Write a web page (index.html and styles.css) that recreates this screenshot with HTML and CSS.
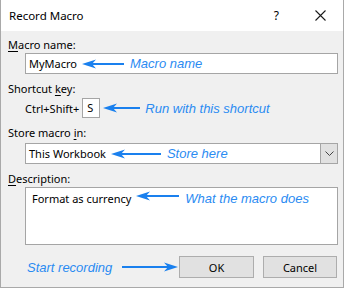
FILE: index.html
```html
<!DOCTYPE html>
<html lang="en">
<head>
  <meta charset="UTF-8" />
  <title>Record Macro</title>
  <link rel="stylesheet" href="styles.css">
</head>
<body>
  <div class="window">
    <div class="titlebar">
      <span class="title">Record Macro</span>
      <span class="help">?</span>
      <svg class="close" width="11" height="11" viewBox="0 0 11 11"><path d="M0.5 0.5 L10.5 10.5 M10.5 0.5 L0.5 10.5" stroke="#1a1a1a" stroke-width="1.1" fill="none"/></svg>
    </div>

    <div class="content">
      <div class="label"><u>M</u>acro name:</div>
      <div class="field textbox">
        <span class="value">MyMacro</span>
        <svg class="arrow" width="42" height="10" viewBox="0 0 42 10"><path d="M0 5 L14 0.5 L10 5 L14 9.5 Z" fill="#1a80ee"/><path d="M10 5 H42" stroke="#1a80ee" stroke-width="2"/></svg>
        <span class="note">Macro name</span>
      </div>

      <div class="label gap">Shortcut <u>k</u>ey:</div>
      <div class="shortcut">
        <span class="keys">Ctrl+Shift+</span>
        <span class="keybox">S</span>
        <svg class="arrow" width="37" height="10" viewBox="0 0 37 10"><path d="M0 5 L14 0.5 L10 5 L14 9.5 Z" fill="#1a80ee"/><path d="M10 5 H37" stroke="#1a80ee" stroke-width="2"/></svg>
        <span class="note">Run with this shortcut</span>
      </div>

      <div class="label gap">Store macro <u>i</u>n:</div>
      <div class="field select">
        <span class="value">This Workbook</span>
        <svg class="arrow" width="50" height="10" viewBox="0 0 50 10"><path d="M0 5 L14 0.5 L10 5 L14 9.5 Z" fill="#1a80ee"/><path d="M10 5 H50" stroke="#1a80ee" stroke-width="2"/></svg>
        <span class="note">Store here</span>
        <span class="dropbtn">
          <svg width="9" height="5" viewBox="0 0 9 5"><path d="M0.5 0.5 L4.5 4.5 L8.5 0.5" stroke="#444" stroke-width="1" fill="none"/></svg>
        </span>
      </div>

      <div class="label gap"><u>D</u>escription:</div>
      <div class="field textarea">
        <span class="value">Format as currency</span>
        <svg class="arrow" width="43" height="10" viewBox="0 0 43 10"><path d="M0 5 L14 0.5 L10 5 L14 9.5 Z" fill="#1a80ee"/><path d="M10 5 H43" stroke="#1a80ee" stroke-width="2"/></svg>
        <span class="note">What the macro does</span>
      </div>

      <div class="footer">
        <span class="note start">Start recording</span>
        <svg class="arrow right" width="56" height="10" viewBox="0 0 56 10"><path d="M0 5 H46" stroke="#1a80ee" stroke-width="2"/><path d="M56 5 L42 0.5 L46 5 L42 9.5 Z" fill="#1a80ee"/></svg>
        <button class="btn">OK</button>
        <button class="btn cancel">Cancel</button>
      </div>
    </div>
  </div>
</body>
</html>
```

FILE: styles.css
```css
* { box-sizing: border-box; }
body { margin: 0; font-family: "Noto Sans", "Open Sans", sans-serif; font-size: 11px; color: #000; }
u { text-decoration-thickness: 1px; text-underline-offset: 2px; }

.window { width: 344px; height: 288px; background: #f0f0f0; border: 1px solid #a9a9a9; border-top: none; }
.titlebar { height: 31px; background: #fff; display: flex; align-items: center; padding-left: 8px; }
.title { font-size: 11.5px; flex: 1; }
.help { font-size: 12px; margin-right: 36px; }
.close { margin-right: 17px; }

.content { padding: 6px 6px 0 7px; }
.label { height: 16px; line-height: 16px; }
.label.gap { margin-top: 7px; }

.field { margin-left: 17px; width: 313px; background: #fff; border: 1px solid #a5a5a5; display: flex; align-items: center; padding-left: 3px; }
.textbox { height: 21px; }
.select { height: 21px; margin-top: 2px; position: relative; }
.textarea { height: 58px; align-items: flex-start; padding: 3px 0 0 6px; }

.arrow { flex: none; margin: 0 6px 0 5px; }
.note { font-family: "Liberation Sans", Arial, sans-serif; font-style: italic; font-size: 13px; color: #2a8bf2; white-space: nowrap; }

.shortcut { display: flex; align-items: center; margin: 1px 0 0 17px; height: 20px; }
.keys { margin-right: 3px; }
.keybox { width: 18px; height: 20px; background: #fff; border: 1px solid #a5a5a5; padding-left: 4px; line-height: 18px; }
.shortcut .arrow { margin: 0 5px 0 3px; }

.dropbtn { position: absolute; right: 0; top: 0; bottom: 0; width: 17px; background: #e1e1e1; border-left: 1px solid #a5a5a5; display: flex; align-items: center; justify-content: center; }

.footer { display: flex; align-items: center; margin-top: 11px; padding-left: 19px; }
.start { width: 95px; flex: none; }
.footer .arrow { margin: 0 1px 0 0; }
.btn { flex: none; height: 22px; width: 75px; background: #e1e1e1; border: 1px solid #adadad; font-family: inherit; font-size: 11px; padding: 0; }
.btn.cancel { width: 74px; margin-left: 9px; }
```
